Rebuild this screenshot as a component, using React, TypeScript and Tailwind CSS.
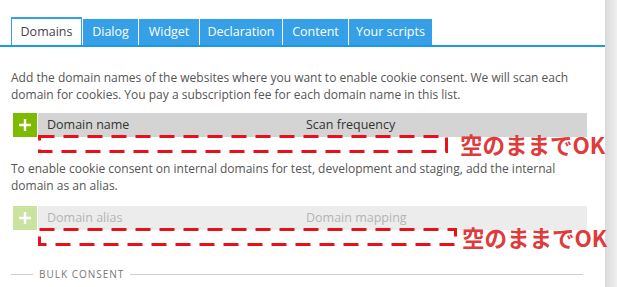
import React from "react";

const tabs = [
  { label: "Domains", w: "w-[71px]", active: true },
  { label: "Dialog", w: "w-[55px]" },
  { label: "Widget", w: "w-[60px]" },
  { label: "Declaration", w: "w-[82px]" },
  { label: "Content", w: "w-[65px]" },
  { label: "Your scripts", w: "w-[83px]" },
];

const DashedNote = ({ width, gap }: { width: number; gap: string }) => (
  <div className="flex items-center h-[18px]">
    <svg width={width} height="18" className="block shrink-0">
      <rect
        x="1.5"
        y="1.5"
        width={width - 3}
        height="15"
        fill="none"
        stroke="#e8101a"
        strokeWidth="3"
        strokeDasharray="15 9"
      />
    </svg>
    <span
      className={`${gap} whitespace-nowrap text-[22.5px] leading-none font-bold text-[#e03a3a] font-['Noto_Sans_CJK_JP',sans-serif]`}
    >
      空のままでOK
    </span>
  </div>
);

const TableHead = ({ left, right, disabled }: { left: string; right: string; disabled?: boolean }) => (
  <div className="flex h-[24px] ml-[2px]">
    <div
      className={`w-[24px] h-[24px] flex items-center justify-center ${disabled ? "bg-[#c9e4a0]" : "bg-[#7cbb00]"}`}
    >
      <svg width="14" height="14" viewBox="0 0 14 14">
        <path d="M7 1v12M1 7h12" stroke="white" strokeWidth="2.4" />
      </svg>
    </div>
    <div
      className={`ml-px w-[549px] flex items-center text-[12.5px] ${disabled ? "bg-[#ececec] text-[#b4b4b4]" : "bg-[#d4d4d4] text-[#333]"}`}
    >
      <span className="pl-[9px] w-[268px]">{left}</span>
      <span>{right}</span>
    </div>
  </div>
);

export default function App() {
  return (
    <div className="flex w-[617px] h-[287px] overflow-hidden bg-white font-['Open_Sans',sans-serif]">
      <div className="w-[605px]">
        <div className="flex items-end gap-px pl-[11px] pt-[17px] border-b-2 border-[#1a9be0]">
          {tabs.map((t) =>
            t.active ? (
              <div
                key={t.label}
                className={`${t.w} h-[28px] flex items-center justify-center bg-white border-t-2 border-x border-[#35a0e8] text-[12.5px] text-[#444]`}
              >
                {t.label}
              </div>
            ) : (
              <div
                key={t.label}
                className={`${t.w} h-[26px] flex items-center justify-center bg-[#35a0e8] text-[12.5px] text-white`}
              >
                {t.label}
              </div>
            )
          )}
        </div>

        <div className="px-[11px]">
          <p className="mt-[22px] text-[12px] leading-[17px] text-[#555]">
            Add the domain names of the websites where you want to enable cookie consent. We will scan each
            <br />
            domain for cookies. You pay a subscription fee for each domain name in this list.
          </p>

          <div className="mt-[10px]">
            <TableHead left="Domain name" right="Scan frequency" />
            <div className="relative h-[23px]">
              <div className="absolute left-[27px] top-[-2px]">
                <DashedNote width={410} gap="ml-[12px]" />
              </div>
            </div>
          </div>

          <p className="text-[12px] leading-[17px] text-[#555]">
            To enable cookie consent on internal domains for test, development and staging, add the internal
            <br />
            domain as an alias.
          </p>

          <div className="mt-[12px]">
            <TableHead left="Domain alias" right="Domain mapping" disabled />
            <div className="relative h-[37px]">
              <div className="absolute left-[27px] top-[-2px]">
                <DashedNote width={419} gap="ml-[5px]" />
              </div>
            </div>
          </div>

          <div className="flex items-center w-[572px]">
            <div className="w-[22px] h-px bg-[#cfcfcf]" />
            <span className="px-[6px] text-[10px] tracking-[1px] text-[#777]">BULK CONSENT</span>
            <div className="flex-1 h-px bg-[#cfcfcf]" />
          </div>
        </div>
      </div>
      <div className="w-[12px] bg-gradient-to-r from-[#dadada] to-[#f0f0f0]" />
    </div>
  );
}
